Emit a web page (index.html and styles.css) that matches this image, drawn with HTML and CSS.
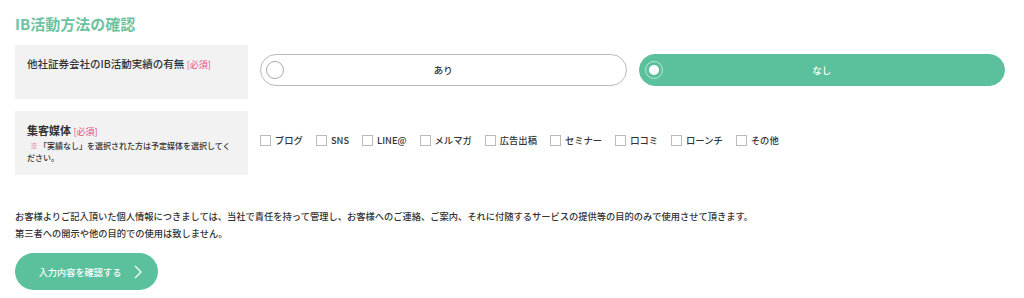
FILE: index.html
```html
<!DOCTYPE html>
<html lang="ja">
<head>
<meta charset="UTF-8">
<meta name="viewport" content="width=device-width, initial-scale=1.0">
<title>IB活動方法の確認</title>
<link rel="stylesheet" href="styles.css">
</head>
<body>

<div id="confirm-form">
    <h2 class="section-title">IB活動方法の確認</h2>

    <div class="form-row">
        <div class="form-label">
            <p class="label-main">他社証券会社のIB活動実績の有無 <span class="required">[必須]</span></p>
        </div>
        <div class="form-field radio-group">
            <label class="radio-pill">
                <span class="radio-mark"></span>
                <span class="radio-text">あり</span>
            </label>
            <label class="radio-pill checked">
                <span class="radio-mark"></span>
                <span class="radio-text">なし</span>
            </label>
        </div>
    </div>

    <div class="form-row">
        <div class="form-label media-label">
            <p class="label-main">集客媒体 <span class="required">[必須]</span></p>
            <p class="label-note"><span class="note-mark">※</span><span>「実績なし」を選択された方は予定媒体を選択してく</span><br><span>ださい。</span></p>
        </div>
        <div class="form-field check-group">
            <label class="check-item"><span class="check-box"></span>ブログ</label>
            <label class="check-item"><span class="check-box"></span>SNS</label>
            <label class="check-item"><span class="check-box"></span>LINE@</label>
            <label class="check-item"><span class="check-box"></span>メルマガ</label>
            <label class="check-item"><span class="check-box"></span>広告出稿</label>
            <label class="check-item"><span class="check-box"></span>セミナー</label>
            <label class="check-item"><span class="check-box"></span>口コミ</label>
            <label class="check-item"><span class="check-box"></span>ローンチ</label>
            <label class="check-item"><span class="check-box"></span>その他</label>
        </div>
    </div>

    <p class="privacy">お客様よりご記入頂いた個人情報につきましては、当社で責任を持って管理し、お客様へのご連絡、ご案内、それに付随するサービスの提供等の目的のみで使用させて頂きます。<br>第三者への開示や他の目的での使用は致しません。</p>

    <button class="submit-btn">入力内容を確認する
        <svg class="chevron" width="8" height="14" viewBox="0 0 8 14"><path d="M1 1 L7 7 L1 13" fill="none" stroke="#fff" stroke-width="1.3"/></svg>
    </button>
</div>

</body>
</html>
```

FILE: styles.css
```css
body {
    font-family: "Noto Sans CJK JP", "Noto Sans", sans-serif;
    margin: 0;
    padding: 0;
    color: #333;
    background: #fff;
}
#confirm-form {
    padding: 13px 19px 0 15px;
}
.section-title {
    margin: 0 0 10px;
    font-size: 15px;
    line-height: 22px;
    font-weight: bold;
    color: #6cc39f;
}
.form-row {
    display: flex;
    gap: 12px;
    margin-bottom: 12px;
}
.form-label {
    width: 233px;
    flex-shrink: 0;
    background-color: #f2f2f2;
    padding: 11px 12px 0;
    box-sizing: border-box;
    height: 54px;
}
.media-label {
    height: 64px;
    padding-top: 12px;
}
.label-main {
    margin: 0;
    font-size: 10.5px;
    line-height: 16px;
    font-weight: 500;
}
.media-label .label-main {
    font-size: 11px;
    line-height: 14px;
    font-weight: bold;
    margin-bottom: 1px;
}
.required {
    color: #e8507f;
    font-size: 9px;
    font-weight: normal;
}
.label-note {
    margin: 0;
    font-size: 8px;
    line-height: 12px;
    font-weight: 500;
    white-space: nowrap;
}
.note-mark {
    color: #e8507f;
    margin-left: 3px;
    margin-right: 1px;
}
.form-field {
    flex: 1;
}
.radio-group {
    display: flex;
    gap: 12px;
    padding-top: 9px;
}
.radio-pill {
    flex: 1;
    height: 32px;
    border: 1px solid #bbb;
    border-radius: 16px;
    box-sizing: border-box;
    display: flex;
    align-items: center;
    position: relative;
    font-size: 9.5px;
    font-weight: 500;
    cursor: pointer;
}
.radio-mark {
    position: absolute;
    left: 5px;
    top: 6px;
    width: 18px;
    height: 18px;
    border: 1px solid #aaa;
    border-radius: 50%;
    box-sizing: border-box;
}
.radio-text {
    flex: 1;
    text-align: center;
}
.radio-pill.checked {
    background-color: #5bc19d;
    border-color: #5bc19d;
    color: #fff;
}
.radio-pill.checked .radio-mark {
    border-color: #b8e6d4;
}
.radio-pill.checked .radio-mark::after {
    content: "";
    position: absolute;
    left: 3px;
    top: 3px;
    width: 10px;
    height: 10px;
    border-radius: 50%;
    background: #fff;
}
.check-group {
    display: flex;
    align-items: center;
    padding-bottom: 6px;
}
.check-item {
    display: flex;
    align-items: center;
    font-size: 9.3px;
    font-weight: 500;
    margin-right: 13px;
}
.check-box {
    width: 11px;
    height: 11px;
    border: 1px solid #bbb;
    margin-right: 4px;
    box-sizing: border-box;
}
.privacy {
    margin: 33px 0 11px;
    font-size: 9.25px;
    line-height: 17px;
    font-weight: 500;
}
.submit-btn {
    width: 143px;
    height: 37px;
    border: none;
    border-radius: 19px;
    background-color: #5bc19d;
    color: #fff;
    font-family: inherit;
    font-size: 9.2px;
    font-weight: 500;
    padding: 0 0 0 8px;
    display: flex;
    align-items: center;
    justify-content: center;
    gap: 13px;
    cursor: pointer;
}
```
